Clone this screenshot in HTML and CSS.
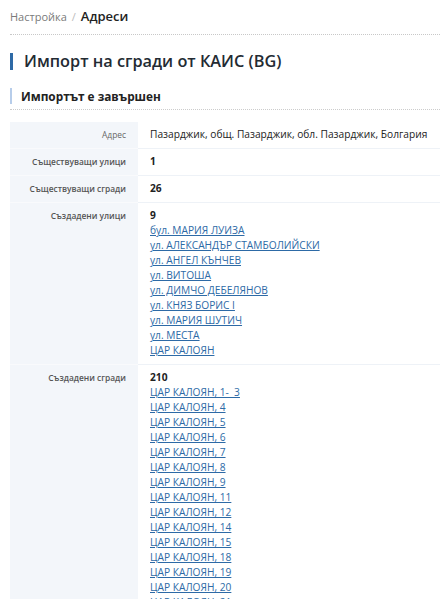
FILE: index.html
```html
<!DOCTYPE html>
<html lang="bg">
<head>
<meta charset="utf-8">
<title>Импорт на сгради от КАИС (BG)</title>
<link rel="stylesheet" href="styles.css">
</head>
<body>
<div class="page">
  <div class="crumbs">
    <a class="crumb-link" href="#">Настройка</a>
    <span class="crumb-sep">/</span>
    <span class="crumb-current">Адреси</span>
  </div>
  <h1 class="title">Импорт на сгради от КАИС (BG)</h1>
  <h2 class="subtitle">Импортът е завършен</h2>
  <table class="info">
    <tr>
      <th class="label label-light">Адрес</th>
      <td class="value">Пазарджик, общ. Пазарджик, обл. Пазарджик, Болгария</td>
    </tr>
    <tr>
      <th class="label">Съществуващи улици</th>
      <td class="value"><b>1</b></td>
    </tr>
    <tr>
      <th class="label">Съществуващи сгради</th>
      <td class="value"><b>26</b></td>
    </tr>
    <tr>
      <th class="label">Създадени улици</th>
      <td class="value">
        <b>9</b>
        <a class="item" href="#">бул. МАРИЯ ЛУИЗА</a>
        <a class="item" href="#">ул. АЛЕКСАНДЪР СТАМБОЛИЙСКИ</a>
        <a class="item" href="#">ул. АНГЕЛ КЪНЧЕВ</a>
        <a class="item" href="#">ул. ВИТОША</a>
        <a class="item" href="#">ул. ДИМЧО ДЕБЕЛЯНОВ</a>
        <a class="item" href="#">ул. КНЯЗ БОРИС I</a>
        <a class="item" href="#">ул. МАРИЯ ШУТИЧ</a>
        <a class="item" href="#">ул. МЕСТА</a>
        <a class="item" href="#">ЦАР КАЛОЯН</a>
      </td>
    </tr>
    <tr>
      <th class="label">Създадени сгради</th>
      <td class="value">
        <b>210</b>
        <a class="item" href="#">ЦАР КАЛОЯН, 1-&nbsp; 3</a>
        <a class="item" href="#">ЦАР КАЛОЯН, 4</a>
        <a class="item" href="#">ЦАР КАЛОЯН, 5</a>
        <a class="item" href="#">ЦАР КАЛОЯН, 6</a>
        <a class="item" href="#">ЦАР КАЛОЯН, 7</a>
        <a class="item" href="#">ЦАР КАЛОЯН, 8</a>
        <a class="item" href="#">ЦАР КАЛОЯН, 9</a>
        <a class="item" href="#">ЦАР КАЛОЯН, 11</a>
        <a class="item" href="#">ЦАР КАЛОЯН, 12</a>
        <a class="item" href="#">ЦАР КАЛОЯН, 14</a>
        <a class="item" href="#">ЦАР КАЛОЯН, 15</a>
        <a class="item" href="#">ЦАР КАЛОЯН, 18</a>
        <a class="item" href="#">ЦАР КАЛОЯН, 19</a>
        <a class="item" href="#">ЦАР КАЛОЯН, 20</a>
        <a class="item" href="#">ЦАР КАЛОЯН, 21</a>
      </td>
    </tr>
  </table>
</div>
</body>
</html>
```

FILE: styles.css
```css
html, body {
  margin: 0;
  padding: 0;
  background: #ffffff;
}

body {
  font-family: "Open Sans", "Noto Sans", sans-serif;
  color: #222;
  overflow: hidden;
}

.page {
  padding: 6px 0 0 10px;
}

.crumbs {
  display: flex;
  align-items: baseline;
  gap: 5px;
  padding-bottom: 7px;
  border-bottom: 1px dotted #c8c8c8;
  line-height: 20px;
}

.crumb-link {
  color: #7a7a7a;
  font-size: 11px;
  text-decoration: none;
}

.crumb-sep {
  color: #bbbbbb;
  font-size: 11px;
}

.crumb-current {
  color: #222;
  font-size: 13px;
  font-weight: 600;
}

.title {
  margin: 18px 0 0 0;
  padding-left: 11px;
  border-left: 3px solid #2e6aa6;
  font-size: 16.3px;
  font-weight: 600;
  line-height: 17px;
  color: #232b33;
}

.subtitle {
  margin: 18px 0 0 0;
  padding: 0 0 5px 0;
  border-bottom: 1px dotted #cccccc;
  font-size: 11.8px;
  font-weight: 700;
  line-height: 16px;
  color: #222;
  display: flex;
}

.subtitle::before {
  content: "";
  width: 2px;
  margin-right: 9px;
  background: #b7cdea;
}

.info {
  margin-top: 12px;
  width: 430px;
  border-collapse: collapse;
  table-layout: fixed;
  font-size: 10.2px;
  line-height: 15px;
}

.info tr + tr th,
.info tr + tr td {
  border-top: 1px solid #eef2f7;
}

.label {
  width: 104px;
  background: #f3f6fa;
  color: #555;
  font-weight: 600;
  font-size: 8.4px;
  text-align: right;
  vertical-align: top;
  padding: 5px 12px 6px 12px;
  white-space: nowrap;
}

.info tr + tr th.label {
  border-top-color: #f9fafc;
}

.label-light {
  font-weight: 400;
  color: #666;
}

.value {
  vertical-align: top;
  padding: 5px 0 6px 12px;
  color: #222;
  white-space: nowrap;
  overflow: hidden;
}

.value b {
  display: block;
  font-weight: 700;
}

.item {
  display: block;
  color: #2d6aa6;
  text-decoration: underline;
}
```
